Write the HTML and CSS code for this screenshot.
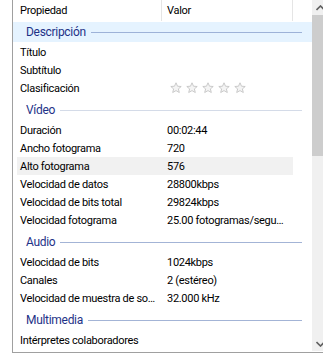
FILE: index.html
```html
<!DOCTYPE html>
<html lang="es">
<head>
  <meta charset="UTF-8" />
  <title>Propiedades</title>
  <link rel="stylesheet" href="styles.css">
</head>
<body>
  <div class="panel">
    <div class="list">
      <div class="header">
        <div class="hcol hname">Propiedad</div>
        <div class="hcol hvalue">Valor</div>
        <div class="hcol hrest"></div>
      </div>

      <div class="group first active"><span>Descripción</span><i class="rule"></i></div>
      <div class="row"><span class="prop">Título</span><span class="val"></span></div>
      <div class="row"><span class="prop">Subtítulo</span><span class="val"></span></div>
      <div class="row"><span class="prop">Clasificación</span>
        <span class="val stars">
          <svg viewBox="0 0 12 12"><path d="M6 0.8l1.5 3.4 3.7.3-2.8 2.4.9 3.6L6 8.6 2.7 10.5l.9-3.6L.8 4.5l3.7-.3z"/></svg>
          <svg viewBox="0 0 12 12"><path d="M6 0.8l1.5 3.4 3.7.3-2.8 2.4.9 3.6L6 8.6 2.7 10.5l.9-3.6L.8 4.5l3.7-.3z"/></svg>
          <svg viewBox="0 0 12 12"><path d="M6 0.8l1.5 3.4 3.7.3-2.8 2.4.9 3.6L6 8.6 2.7 10.5l.9-3.6L.8 4.5l3.7-.3z"/></svg>
          <svg viewBox="0 0 12 12"><path d="M6 0.8l1.5 3.4 3.7.3-2.8 2.4.9 3.6L6 8.6 2.7 10.5l.9-3.6L.8 4.5l3.7-.3z"/></svg>
          <svg viewBox="0 0 12 12"><path d="M6 0.8l1.5 3.4 3.7.3-2.8 2.4.9 3.6L6 8.6 2.7 10.5l.9-3.6L.8 4.5l3.7-.3z"/></svg>
        </span>
      </div>

      <div class="group light"><span>Vídeo</span><i class="rule"></i></div>
      <div class="row"><span class="prop">Duración</span><span class="val">00:02:44</span></div>
      <div class="row"><span class="prop">Ancho fotograma</span><span class="val">720</span></div>
      <div class="row hot"><span class="prop">Alto fotograma</span><span class="val">576</span></div>
      <div class="row"><span class="prop">Velocidad de datos</span><span class="val">28800kbps</span></div>
      <div class="row"><span class="prop">Velocidad de bits total</span><span class="val">29824kbps</span></div>
      <div class="row"><span class="prop">Velocidad fotograma</span><span class="val">25.00 fotogramas/segundo</span></div>

      <div class="group"><span>Audio</span><i class="rule"></i></div>
      <div class="row"><span class="prop">Velocidad de bits</span><span class="val">1024kbps</span></div>
      <div class="row"><span class="prop">Canales</span><span class="val">2 (estéreo)</span></div>
      <div class="row"><span class="prop">Velocidad de muestra de sonido</span><span class="val">32.000 kHz</span></div>

      <div class="group"><span>Multimedia</span><i class="rule"></i></div>
      <div class="row"><span class="prop">Intérpretes colaboradores</span><span class="val"></span></div>
    </div>

    <div class="scrollbar">
      <div class="arrow">
        <svg viewBox="0 0 9 6"><path d="M0.5 5L4.5 1l4 4"/></svg>
      </div>
      <div class="track"><div class="thumb"></div></div>
      <div class="arrow">
        <svg viewBox="0 0 9 6"><path d="M0.5 1l4 4 4-4"/></svg>
      </div>
    </div>
  </div>
</body>
</html>
```

FILE: styles.css
```css
:root {
  --font-ui: Roboto, 'Liberation Sans', sans-serif;
  --text: #000;
  --group-text: #1e3287;
  --group-rule: #a3b4d6;
  --border: #a0a0a0;
  --col-sep: #e5e5e5;
}

body {
  margin: 0;
  background: #fff;
  font-family: var(--font-ui);
  font-size: 11px;
  letter-spacing: -0.3px;
  color: var(--text);
  overflow: hidden;
}

.panel {
  display: flex;
  margin-left: 12px;
  width: 317px;
  height: 352px;
  border-left: 1px solid var(--border);
  border-bottom: 1px solid var(--border);
}

.list {
  width: 299px;
  flex-shrink: 0;
}

.header {
  display: flex;
  height: 22px;
}

.hcol {
  display: flex;
  align-items: center;
  height: 21px;
}

.hname {
  width: 141px;
  padding-left: 7px;
  border-right: 1px solid var(--col-sep);
}

.hvalue {
  width: 125px;
  padding-left: 5px;
  border-right: 1px solid var(--col-sep);
}

.hrest {
  flex: 1;
}

.group {
  display: flex;
  align-items: center;
  height: 20px;
  margin: 3px 0 1px;
  padding-left: 13px;
  color: var(--group-text);
  font-size: 12px;
}

.group.first {
  margin-top: 0;
}

.group.active {
  background: #e5f3ff;
}

.group .rule {
  flex: 1;
  height: 1px;
  margin: 0 10px 0 5px;
  background: var(--group-rule);
}

.group.active .rule {
  background: #9db2d8;
}

.group.light .rule {
  background: #d4dbe8;
}

.row {
  display: flex;
  align-items: center;
  height: 18px;
  width: 276px;
  margin-left: 4px;
}

.row.hot {
  background: #f1f1f1;
}

.prop {
  width: 137px;
  padding: 0 4px 0 3px;
  white-space: nowrap;
  overflow: hidden;
  text-overflow: ellipsis;
}

.val {
  flex: 1;
  min-width: 0;
  padding: 0 4px 0 6px;
  white-space: nowrap;
  overflow: hidden;
  text-overflow: ellipsis;
}

.stars {
  display: flex;
  gap: 4px;
  padding-left: 9px;
}

.stars svg {
  width: 12px;
  height: 12px;
  fill: #f4f4f4;
  stroke: #c4c4c4;
  stroke-width: 0.9;
  stroke-linejoin: round;
}

.scrollbar {
  display: flex;
  flex-direction: column;
  width: 17px;
  background: #f0f0f0;
  margin-bottom: 1px;
}

.arrow {
  display: flex;
  align-items: center;
  justify-content: center;
  height: 15px;
}

.arrow svg {
  width: 9px;
  height: 6px;
  fill: none;
  stroke: #606060;
  stroke-width: 1.6;
}

.track {
  flex: 1;
}

.thumb {
  height: 141px;
  background: #cdcdcd;
}
```
